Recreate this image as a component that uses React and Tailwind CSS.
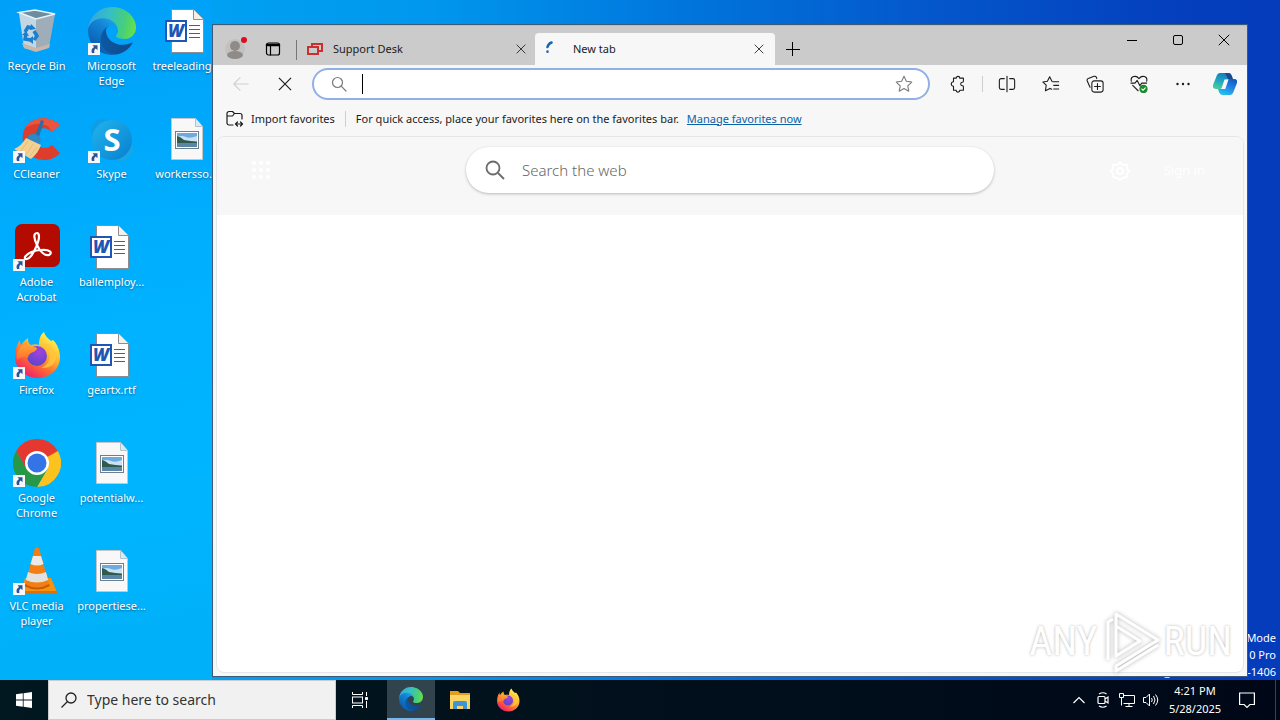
import React, { useId, useState } from "react";

const svgText = { fontFamily: '"Open Sans", sans-serif' };

const ShortcutArrow = () => (
  <svg className="absolute bottom-0 left-0 w-3 h-3" viewBox="0 0 12 12">
    <rect width="12" height="12" fill="#f6f7f9" />
    <path d="M4.500 2.200h5v5L7.800 5.600C6.300 6.600 5.900 7.800 6.400 10H4C2.900 7.400 3.700 5.300 6.100 3.900z" fill="#2b5197" />
  </svg>
);

const RecycleBin = () => (
  <svg className="w-12 h-12" viewBox="0 0 48 48">
    <path d="M6 6l17 5v33L11 41z" fill="#c3d6e3" />
    <path d="M23 11l19-4-6 33-13 4z" fill="#9fadb9" />
    <path d="M7 6l15-3 20 4-19 5z" fill="#6e8ca0" />
    <path d="M9 36l14 5 14-4-1 4-13 4-12-4z" fill="#c9b7ab" />
    <path d="M6 5.500l16-2.500 20 4-19 5z" fill="none" stroke="#e6f3fb" strokeWidth="1.500" />
    <g fill="none" stroke="#1b7fd0" strokeWidth="3.500">
      <path d="M12 25l3-5 4 1" />
      <path d="M21 24l3 5-3 4" />
      <path d="M18 33l-6-1 1-5" />
    </g>
    <g fill="#1b7fd0">
      <path d="M18 17l5 5-6 1z" />
      <path d="M20 29v8l-5-4z" />
      <path d="M9 28l4-4 3 5z" />
    </g>
  </svg>
);

const EdgeLogo = ({ className }) => {
  const id = useId();
  return (
    <svg className={className} viewBox="0 0 256 256">
      <defs>
        <linearGradient id={`${id}a`} x1="60" y1="177" x2="237" y2="177" gradientUnits="userSpaceOnUse">
          <stop offset="0" stopColor="#0c59a4" />
          <stop offset="1" stopColor="#114a8b" />
        </linearGradient>
        <linearGradient id={`${id}b`} x1="150" y1="95" x2="45" y2="230" gradientUnits="userSpaceOnUse">
          <stop offset="0" stopColor="#1b9de2" />
          <stop offset="0.3" stopColor="#1383d6" />
          <stop offset="1" stopColor="#0b5cae" />
        </linearGradient>
        <linearGradient id={`${id}c`} x1="10" y1="70" x2="250" y2="120" gradientUnits="userSpaceOnUse">
          <stop offset="0" stopColor="#35a8dc" />
          <stop offset="0.4" stopColor="#36bfc4" />
          <stop offset="0.75" stopColor="#46cf7a" />
          <stop offset="1" stopColor="#66e04a" />
        </linearGradient>
      </defs>
      <path
        fill={`url(#${id}a)`}
        d="M231.07 190.54c-3.33 1.77-6.87 3.38-10.56 4.76a101.7 101.7 0 01-35.9 6.46c-47.32 0-88.54-32.55-88.54-74.32A31.5 31.5 0 01112.63 100c-42.8 1.8-53.8 46.4-53.8 72.53 0 73.88 68.09 81.37 82.76 81.37 7.91 0 19.84-2.3 27-4.56l1.31-.44a128.34 128.34 0 0066.6-52.8 4 4 0 00-5.43-5.57z"
      />
      <path
        fill={`url(#${id}b)`}
        d="M105.73 241.42a79.2 79.2 0 01-22.74-21.34 80.72 80.72 0 0129.5-120c3.13-1.47 8.45-4.13 15.54-4a32.35 32.35 0 0125.69 13 31.88 31.88 0 016.36 18.66c0-.21 24.46-79.6-80-79.6-43.9 0-80 41.66-80 78.21a130.15 130.15 0 0012.11 56 128 128 0 00156.38 67.11 75.55 75.55 0 01-62.78-8z"
      />
      <path
        fill={`url(#${id}c)`}
        d="M152.33 148.86c-.81 1.05-3.3 2.5-3.3 5.66 0 2.61 1.7 5.12 4.72 7.23 14.38 10 41.49 8.68 41.56 8.68a59.56 59.56 0 0030.27-8.35A61.38 61.38 0 00256 109.21c.26-22.41-8-37.31-11.34-43.91C223.46 23.84 177.72 0 128 0A128 128 0 000 126.2c.48-36.54 36.8-66.05 80-66.05 3.5 0 23.46.34 42 10.07 16.34 8.58 24.9 18.94 30.85 29.21 6.18 10.67 7.28 24.15 7.28 29.52s-2.74 13.33-7.8 19.91z"
      />
    </svg>
  );
};

const FirefoxLogo = ({ className }) => {
  const id = useId();
  return (
    <svg className={className} viewBox="0 0 48 48">
      <defs>
        <linearGradient id={`${id}a`} x1="38" y1="6" x2="12" y2="44" gradientUnits="userSpaceOnUse">
          <stop offset="0" stopColor="#fff04a" />
          <stop offset="0.35" stopColor="#ffb52e" />
          <stop offset="0.65" stopColor="#ff6a33" />
          <stop offset="1" stopColor="#f0206c" />
        </linearGradient>
        <radialGradient id={`${id}b`} cx="0.6" cy="0.3" r="0.8">
          <stop offset="0" stopColor="#a43fe0" />
          <stop offset="1" stopColor="#5049c6" />
        </radialGradient>
        <linearGradient id={`${id}c`} x1="0" y1="0" x2="0" y2="1">
          <stop offset="0" stopColor="#ffa436" />
          <stop offset="1" stopColor="#ff6d2b" />
        </linearGradient>
      </defs>
      <path
        fill={`url(#${id}a)`}
        d="M31 1c1 4 4 6 7 9l2-1c4 4 7 10 7 17 0 12-10 21-22 21S2 38 2 26C2 19 4 13 7 9c0 2 0 3 1 5 2-3 4-5 7-7 0 4 1 6 3 7 3-1 6-1 8 0 0-5 1-10 5-13z"
      />
      <circle cx="24" cy="25" r="10" fill={`url(#${id}b)`} />
      <path
        fill={`url(#${id}c)`}
        d="M7 16c5-3 9-3 12 0 3 0 5 0 5 2-1 2-4 3-6 4-2 1-3 3-3 5-4-2-8-1-11 2-1-5 0-9 3-13z"
      />
      <path fill="#ffc53d" d="M27 13c7 1 11 7 10 13-1 5-4 9-9 11 10 1 16-6 15-13-1-5-4-8-7-11-3 0-6-1-9 0z" opacity="0.85" />
    </svg>
  );
};

const CCleanerLogo = () => (
  <svg className="w-12 h-12" viewBox="0 0 48 48">
    <path d="M47 10C37 0 19 1 12 13c-5 10-2 22 8 29 9 5 20 4 27-4l-8-8c-5 4-11 4-15-1-3-5-3-11 2-14 4-3 9-2 13 2z" fill="#dd3d2d" />
    <path d="M47 10C37 0 19 1 12 13c8-5 15-5 23-2l4 6z" fill="#ec5440" />
    <path d="M28 5l3 1-6 19-4-2z" fill="#2471a9" />
    <path d="M15 21c5-4 11-1 13 3l-2 6-12-5z" fill="#3187c2" />
    <path d="M13 23l15 7c-2 5-5 10-10 14L1 34c5-2 9-6 12-11z" fill="#f2d092" />
    <path d="M15 26l-7 10m12-7l-7 11m11-8l-7 9" stroke="#e6bd7c" fill="none" />
  </svg>
);

const SkypeLogo = () => (
  <svg className="w-12 h-12" viewBox="0 0 48 48">
    <defs>
      <linearGradient id="skype" x1="0" y1="0" x2="1" y2="1">
        <stop offset="0" stopColor="#22b5ee" />
        <stop offset="1" stopColor="#087fce" />
      </linearGradient>
    </defs>
    <circle cx="15" cy="16" r="12" fill="#109de3" />
    <circle cx="33" cy="34" r="12" fill="#17a7e6" />
    <circle cx="24" cy="25" r="20" fill="url(#skype)" />
    <text x="24" y="36" textAnchor="middle" fontSize="31" fontWeight="700" fill="#fff" style={svgText}>S</text>
  </svg>
);

const AcrobatLogo = () => (
  <svg className="w-12 h-12" viewBox="0 0 48 48">
    <rect x="2" y="1" width="45" height="43" rx="7" fill="#b30b00" />
    <path
      d="M24 10c-4 0-3 6 0 12 3 7 8 11 12 10 4-2 1-6-8-5-6 0-14 3-16 7-1 3 3 3 6-1 4-5 8-15 8-19 0-3-1-4-2-4z"
      fill="none"
      stroke="#fff"
      strokeWidth="2.200"
    />
  </svg>
);

const ChromeLogo = () => (
  <svg className="w-12 h-12" viewBox="0 0 48 48">
    <path d="M24 24L3.200 12A24 24 0 0 1 44.800 12z" fill="#e5392f" />
    <path d="M24 12h20.800A24 24 0 0 1 24 48l10.400-18z" fill="#fcc31e" />
    <path d="M13.600 30L3.200 12A24 24 0 0 0 24 48l10.400-18z" fill="#279847" />
    <path d="M24 12h20.800L24 24 13.600 30 3.200 12z" fill="#e5392f" />
    <circle cx="24" cy="24" r="12" fill="#fff" />
    <circle cx="24" cy="24" r="9.500" fill="#3474e6" />
  </svg>
);

const VlcLogo = () => (
  <svg className="w-12 h-12" viewBox="0 0 48 48">
    <path d="M12 31h26l6 14H8z" fill="#f5920f" />
    <path d="M8 44h36v2H8z" fill="#dd6f0a" />
    <path d="M22 1q2-1 4 0l10 36q-12 7-24 0z" fill="#f37f14" />
    <path d="M20 9h8l2.500 8q-6.500 3-13 0z" fill="#eceae6" />
    <path d="M15 25q9 4 18 0l2.200 8q-11.200 5-22.400 0z" fill="#e3e1de" />
    <path d="M12 37q12 7 24 0l1 2q-13 7-26 0z" fill="#c95a08" />
  </svg>
);

const WordFile = () => (
  <svg className="w-12 h-12" viewBox="0 0 48 48">
    <path d="M8.500 2.500h22l10 10v33h-32z" fill="#fff" stroke="#8d8d8d" />
    <path d="M30.500 2.500v10h10" fill="#f3efe9" stroke="#8d8d8d" />
    <path d="M26 18.500h11M26 22.500h11M26 26.500h11M26 30.500h11" stroke="#2a66b4" />
    <rect x="3" y="14" width="20" height="20" fill="#fff" stroke="#1f55b5" strokeWidth="2" />
    <text x="13" y="30" textAnchor="middle" fontSize="17" fontWeight="800" fontStyle="italic" fill="#1f55b5" style={svgText}>W</text>
  </svg>
);

const ImageFile = () => (
  <svg className="w-12 h-12" viewBox="0 0 48 48">
    <path d="M8.500 3.500h24l7 8v33h-31z" fill="#f8f8f8" stroke="#c4c6c8" />
    <path d="M32.500 3.500v8h7" fill="#d7ebf5" stroke="#b5c3cc" />
    <rect x="12.500" y="16.500" width="23" height="17" fill="#fff" stroke="#6d7f8f" />
    <rect x="14" y="18" width="20" height="14" fill="#6ea9e0" />
    <path d="M14 22q5-2 9 0t11-1v5H14z" fill="#c7e2f6" />
    <path d="M14 21q4 1 7 4l13 2v1H14z" fill="#2f5a4c" />
    <path d="M14 28h20v4H14z" fill="#5b87a6" />
  </svg>
);

const desktopItems = [
  { label: "Recycle Bin", Icon: RecycleBin },
  { label: "CCleaner", Icon: CCleanerLogo, shortcut: true },
  { label: "Adobe Acrobat", Icon: AcrobatLogo, shortcut: true },
  { label: "Firefox", Icon: () => <FirefoxLogo className="w-12 h-12" />, shortcut: true },
  { label: "Google Chrome", Icon: ChromeLogo, shortcut: true },
  { label: "VLC media player", Icon: VlcLogo, shortcut: true },
  { label: "Microsoft Edge", Icon: () => <EdgeLogo className="w-12 h-12" />, shortcut: true },
  { label: "Skype", Icon: SkypeLogo, shortcut: true },
  { label: "ballemploy...", Icon: WordFile },
  { label: "geartx.rtf", Icon: WordFile },
  { label: "potentialw...", Icon: ImageFile },
  { label: "propertiese...", Icon: ImageFile },
  { label: "treeleading...", Icon: WordFile },
  { label: "workersso...", Icon: ImageFile },
];

const DesktopItem = ({ label, Icon, shortcut }) => (
  <button className="flex flex-col items-center pt-[7px]">
    <span className="relative block w-12 h-12">
      <Icon />
      {shortcut && <ShortcutArrow />}
    </span>
    <span className="mt-[3px] w-[74px] text-[11px] leading-[15px] text-white text-center [text-shadow:0_1px_2px_rgba(0,40,80,0.6)]">
      {label}
    </span>
  </button>
);

// 20x20 line icon used all over the browser chrome
const LineIcon = ({ className = "w-5 h-5", children }) => (
  <svg
    className={className}
    viewBox="0 0 20 20"
    fill="none"
    stroke="currentColor"
    strokeWidth="1.200"
    strokeLinecap="round"
    strokeLinejoin="round"
  >
    {children}
  </svg>
);

const ToolButton = ({ label, children }) => (
  <button aria-label={label} className="w-11 h-8 shrink-0 flex items-center justify-center text-[#1b1b1b]">
    {children}
  </button>
);

const CloseGlyph = ({ className }) => (
  <svg className={className} viewBox="0 0 12 12" stroke="currentColor" fill="none">
    <path d="M.8.8l10.400 10.400M11.200.8L.8 11.200" />
  </svg>
);

const TabStrip = () => (
  <div className="h-10 shrink-0 flex bg-[#cbcbcb] border-t border-[#bdbdbd]">
    <button aria-label="Profile" className="ml-3 w-6 mt-1 flex items-center justify-center">
      <svg className="w-6 h-6" viewBox="0 0 24 24">
        <circle cx="10" cy="13" r="10" fill="#c3c1bf" />
        <circle cx="10" cy="10" r="5" fill="#8f8b88" />
        <ellipse cx="10" cy="19" rx="8" ry="4" fill="#8f8b88" />
        <circle cx="19" cy="4" r="3" fill="#e00b1c" />
      </svg>
    </button>
    <button aria-label="Tab actions" className="ml-3 w-6 mt-1.5 flex items-center justify-center text-black">
      <LineIcon className="w-5 h-5">
        <rect x="3.500" y="4" width="13" height="12" rx="2" strokeWidth="1.200" />
        <path d="M4 6h12" strokeWidth="2.500" />
        <path d="M7.500 7v9" />
      </LineIcon>
    </button>
    <div className="ml-[11px] mt-3.5 w-px h-5 bg-[#777]" />
    <div className="flex flex-1 mt-[7px] h-8 min-w-0">
      <div className="w-[238px] pl-2.5 pr-1 flex items-center text-[#1b1b1b]">
        <svg className="w-4 h-4 shrink-0" viewBox="0 0 16 16" fill="none" stroke="#c9302f" strokeWidth="2">
          <path d="M5 5V3h10v7h-3" />
          <rect x="1" y="6" width="10" height="7" />
        </svg>
        <span className="ml-2.5 flex-1 text-[11px]">Support Desk</span>
        <button aria-label="Close Support Desk" className="w-4 h-4 mr-0.5 flex items-center justify-center">
          <CloseGlyph className="w-2.5 h-2.5" />
        </button>
      </div>
      <div className="w-60 px-2 flex items-center rounded-t bg-[#f7f7f7] text-[#1b1b1b]">
        <svg className="w-4 h-4 shrink-0" viewBox="0 0 16 16" fill="none" stroke="#1765ae" strokeWidth="2.500" strokeLinecap="round">
          <path d="M4.500 6q1-3.500 4-4.500M4.500 10.500v.2" />
        </svg>
        <span className="ml-3.5 flex-1 text-[11px]">New tab</span>
        <button aria-label="Close New tab" className="w-4 h-4 flex items-center justify-center">
          <CloseGlyph className="w-2.5 h-2.5" />
        </button>
      </div>
      <button aria-label="New tab" className="w-9 flex items-center justify-center text-black">
        <svg className="w-3.5 h-3.5" viewBox="0 0 14 14" stroke="currentColor">
          <path d="M6.500 0v14M0 7.500h14" />
        </svg>
      </button>
    </div>
    <div className="flex h-7">
      <button aria-label="Minimize" className="w-[46px] flex items-center justify-center text-black">
        <svg className="w-2.5 h-2.5" viewBox="0 0 10 10" stroke="currentColor">
          <path d="M0 5.500h10" />
        </svg>
      </button>
      <button aria-label="Maximize" className="w-[46px] flex items-center justify-center text-black">
        <svg className="w-2.5 h-2.5" viewBox="0 0 10 10" stroke="currentColor" fill="none">
          <rect x=".5" y=".5" width="9" height="9" rx="1.500" />
        </svg>
      </button>
      <button aria-label="Close" className="w-[46px] flex items-center justify-center text-black">
        <CloseGlyph className="w-3 h-3" />
      </button>
    </div>
  </div>
);

const Toolbar = () => {
  const [url, setUrl] = useState("");

  return (
    <div className="flex items-center h-[38px] shrink-0 pl-1.5">
      <button aria-label="Back" className="w-11 h-8 flex items-center justify-center text-[#cfcfcf]">
        <LineIcon className="w-[18px] h-[18px]">
          <path d="M18 10H2.500M9 3L2 10l7 7" />
        </LineIcon>
      </button>
      <ToolButton label="Stop">
        <CloseGlyph className="w-3.5 h-3.5" />
      </ToolButton>
      <div className="ml-[5px] flex-1 h-8 px-[15px] flex items-center rounded-full bg-white border-2 border-[#91b0e6]">
        <LineIcon className="w-5 h-5 text-[#7a7a7a]">
          <circle cx="8.500" cy="8.500" r="5" />
          <path d="M12.200 12.200L17 17" />
        </LineIcon>
        <div className="ml-[13px] w-px h-5 bg-black" />
        <input
          aria-label="Address and search bar"
          value={url}
          onChange={(e) => setUrl(e.target.value)}
          className="flex-1 min-w-0 text-sm outline-none bg-transparent"
        />
        <button aria-label="Add to favorites" className="text-[#7a7a7a]">
          <LineIcon className="w-[18px] h-[18px]">
            <path d="M10 1.500l2.600 5.500 6 .8-4.400 4.200 1.100 6L10 15.100 4.700 18l1.100-6L1.400 7.800l6-.8z" />
          </LineIcon>
        </button>
      </div>
      <div className="ml-1.5" />
      <ToolButton label="Extensions">
        <LineIcon className="w-[18px] h-[18px]">
          <path d="M5 3.500h3a2 2 0 014 0h4v3.500a1 1 0 01-1 1 2 2 0 000 4 1 1 0 011 1v4h-4a2 2 0 01-4 0H5v-4.500a2.500 2.500 0 010-5z" />
        </LineIcon>
      </ToolButton>
      <div className="mx-0.5 w-px h-4 bg-[#cfcfcf]" />
      <ToolButton label="Split screen">
        <LineIcon className="w-[18px] h-[18px]">
          <path d="M10 1.500v17M7 4H3.500A2 2 0 001.500 6v8a2 2 0 002 2H7M13 4h3.500a2 2 0 012 2v8a2 2 0 01-2 2H13" />
        </LineIcon>
      </ToolButton>
      <ToolButton label="Favorites">
        <LineIcon className="w-[18px] h-[18px]">
          <path d="M12 7.500h6.500M13 11.500h5.500M13 15.500h5.500M11 7L8.500 2 6 7l-5 .8 3.700 3.500-.9 6.200 5-2.600 2 1" />
        </LineIcon>
      </ToolButton>
      <ToolButton label="Collections">
        <LineIcon className="w-[18px] h-[18px]">
          <path d="M4.500 13.500L1.500 7A2 2 0 012.500 4L9 1.500a2 2 0 012.500 1l.5 1.500" />
          <rect x="6.500" y="6.500" width="12.500" height="12.500" rx="2.500" />
          <path d="M12.750 9.500v6.500M9.500 12.750H16" />
        </LineIcon>
      </ToolButton>
      <ToolButton label="Browser essentials">
        <LineIcon className="w-[18px] h-[18px]">
          <path d="M1.500 7C0 1 7 0 10 4 13 0 20 1 18.500 7M3 11.500l6 6" />
          <path d="M1 9h4.500L8 6l3 6 2-3h5.500" />
          <circle cx="15" cy="15.500" r="4" fill="#1b8a2d" stroke="#1b8a2d" />
          <path d="M13 15.500l1.500 1.500 2.500-2.700" stroke="#fff" />
        </LineIcon>
      </ToolButton>
      <ToolButton label="Settings and more">
        <svg className="w-4 h-4" viewBox="0 0 16 16" fill="currentColor">
          <circle cx="2.500" cy="8" r="1.200" />
          <circle cx="8" cy="8" r="1.200" />
          <circle cx="13.500" cy="8" r="1.200" />
        </svg>
      </ToolButton>
      <button aria-label="Copilot" className="w-10 h-8 shrink-0 flex items-center justify-center mr-0.5">
        <svg className="w-6 h-6" viewBox="0 0 24 24">
          <defs>
            <linearGradient id="copA" x1="0.5" y1="0" x2="0.2" y2="1">
              <stop offset="0" stopColor="#0f7fc4" />
              <stop offset="0.5" stopColor="#22a7bd" />
              <stop offset="1" stopColor="#4fcf9a" />
            </linearGradient>
            <linearGradient id="copB" x1="0.8" y1="0" x2="0.3" y2="1">
              <stop offset="0" stopColor="#1558b8" />
              <stop offset="0.5" stopColor="#2383e8" />
              <stop offset="1" stopColor="#22c3f2" />
            </linearGradient>
          </defs>
          <path d="M4 3q1-2 3-2h8q2 0 3 3l1 3h-4q-2 0-3 3l-2 5q-1 2-3 2H3q-4 0-3-4z" fill="url(#copA)" />
          <path d="M20 21q-1 2-3 2H9q-2 0-3-3l-1-3h3q2 0 3-3l2-5q1-2 3-2h5q4 0 3 4z" fill="url(#copB)" />
          <path d="M12 1h4q2 0 3 3l1 3h-5z" fill="#174a93" />
          <path d="M11.500 7.500h4l-3.200 9.500h-4z" fill="#f7f7f7" />
        </svg>
      </button>
    </div>
  );
};

const FavoritesBar = () => (
  <div className="flex items-center h-[33px] shrink-0 pl-3 pb-px text-[11px] text-[#1b1b1b] whitespace-nowrap">
    <button className="flex items-center gap-1.5">
      <LineIcon className="w-5 h-5">
        <path d="M8 16H4a2 2 0 01-2-2V4.500a2 2 0 012-2h3.500l2 2H15a2 2 0 012 2V10M2 7h5.500l2-2.500" />
        <path d="M10.500 15h7M12.500 13l-2 2 2 2M15.500 13l2 2-2 2" />
      </LineIcon>
      Import favorites
    </button>
    <div className="mx-2.5 w-px h-4 bg-[#cfcfcf]" />
    <span>For quick access, place your favorites here on the favorites bar.</span>
    <a href="#favorites" className="ml-2 text-[#0b62a8] underline">
      Manage favorites now
    </a>
  </div>
);

const NewTabPage = () => {
  const [query, setQuery] = useState("");

  return (
    <div className="flex-1 mx-[3px] mb-[3px] rounded-lg border border-[#e4e7e8] bg-white overflow-hidden">
      <div className="h-[78px] pl-8 pr-[38px] flex items-start justify-between bg-[#f7f7f7]">
        <div className="flex-1 h-5 mt-6 flex">
          <button aria-label="App launcher" className="text-white">
            <svg className="w-6 h-5" viewBox="0 0 24 20" fill="currentColor">
              {[2, 9, 16].map((y) =>
                [5, 12, 19].map((x) => <circle key={`${x}-${y}`} cx={x} cy={y} r="2" />)
              )}
            </svg>
          </button>
        </div>
        <label className="w-[528px] h-[46px] mt-2.5 ml-1.5 px-[18px] flex items-center gap-4 rounded-full bg-white shadow-[0_1px_3px_rgba(0,0,0,0.25)]">
          <svg className="w-[22px] h-[22px] text-[#6b6b6b]" viewBox="0 0 22 22" fill="none" stroke="currentColor" strokeWidth="1.800">
            <circle cx="9" cy="9" r="6.500" />
            <path d="M14 14l6 6" />
          </svg>
          <input
            aria-label="Search the web"
            placeholder="Search the web"
            value={query}
            onChange={(e) => setQuery(e.target.value)}
            className="flex-1 text-[15px] font-light outline-none placeholder:text-[#666]"
          />
        </label>
        <div className="flex-1 mt-[22px] h-6 flex items-center justify-end gap-[34px] text-white">
          <button aria-label="Page settings">
            <svg className="w-5 h-5" viewBox="0 0 20 20" fill="none" stroke="currentColor" strokeWidth="2">
              <path d="M10 1l3 3 4 0 0 4 2 2-2 3v3l-4 1-3 2-3-2-4-1v-3l-2-3 2-2V4h4z" />
              <circle cx="10" cy="10" r="3" />
            </svg>
          </button>
          <a href="#signin" className="text-[13px]">Sign in</a>
        </div>
      </div>
    </div>
  );
};

const Watermark = () => (
  <div className="absolute right-12 bottom-1.5 h-16 flex items-center text-[40px] leading-none text-white font-['Roboto_Condensed','Open_Sans_Condensed','Liberation_Sans_Narrow','DejaVu_Sans_Condensed',sans-serif] [text-shadow:0_0_3px_rgba(0,0,0,0.3)] pointer-events-none">
    <span>ANY</span>
    <svg className="ml-1 w-[62px] h-16 drop-shadow-[0_0_2px_rgba(0,0,0,0.3)]" viewBox="0 0 62 64" fill="none" stroke="#fff" strokeWidth="3">
      <path d="M14 20V4l42 26-42 26v5l42-26M14 18v28l24-15-24-15" strokeLinejoin="round" />
      <path d="M6 50V12l5-3" />
    </svg>
    <span>RUN</span>
  </div>
);

const BrowserWindow = () => (
  <div className="absolute left-[212px] right-8 top-6 bottom-[3px] flex flex-col border border-[#3c5a78] bg-[#f7f7f7]">
    <TabStrip />
    <Toolbar />
    <FavoritesBar />
    <NewTabPage />
  </div>
);

const Taskbar = () => (
  <div className="h-10 shrink-0 flex bg-gradient-to-r from-[#011820] via-[#01101c] to-[#000818] text-white">
    <button aria-label="Start" className="w-12 flex items-center justify-center">
      <svg className="w-4 h-4" viewBox="0 0 16 16" fill="#fff">
        <path d="M0 2.200l6.800-.9v6.300H0zM7.600 1.200L16 0v7.600H7.600zM0 8.400h6.800v6.300L0 13.800zM7.600 8.400H16V16l-8.400-1.200z" />
      </svg>
    </button>
    <label className="w-72 px-3 flex items-center gap-2.5 bg-[#f1f1f1] border border-[#c9cdcf] text-[#222]">
      <svg className="w-4 h-4 shrink-0" viewBox="0 0 16 16" fill="none" stroke="currentColor" strokeWidth="1.300">
        <circle cx="10" cy="6" r="5" />
        <path d="M6.500 9.500L.5 15.500" />
      </svg>
      <input
        aria-label="Type here to search"
        placeholder="Type here to search"
        className="flex-1 min-w-0 text-sm outline-none placeholder:text-[#333]"
      />
    </label>
    <button aria-label="Task View" className="w-[51px] pr-1 flex items-center justify-center">
      <svg className="w-4 h-4" viewBox="0 0 16 16" fill="none" stroke="#fff">
        <path d="M.5 0v2.500h10V0M.5 16v-2.500h10V16M14.500 0v4M14.500 9v7" />
        <rect x=".5" y="5" width="10" height="6" />
        <path d="M13.500 5.500h2v2h-2z" fill="#fff" />
      </svg>
    </button>
    <button aria-label="Microsoft Edge" className="w-12 flex items-center justify-center bg-[#31434c] border-b-2 border-[#76b9ed]">
      <EdgeLogo className="w-6 h-6" />
    </button>
    <button aria-label="File Explorer" className="w-[49px] flex items-center justify-center">
      <svg className="w-6 h-6" viewBox="0 0 24 24">
        <path d="M2 3h8l2 2h10v4H2z" fill="#e39e1e" />
        <path d="M2 7h20v14H2z" fill="#fcd462" />
        <path d="M5 21v-6q0-2 2-2h10q2 0 2 2v6h-4v-3H9v3z" fill="#3b95d8" />
      </svg>
    </button>
    <button aria-label="Firefox" className="w-12 flex items-center justify-center">
      <FirefoxLogo className="w-6 h-6" />
    </button>
    <div className="ml-auto flex items-center">
      <div className="flex items-center gap-2">
        <button aria-label="Show hidden icons">
          <svg className="w-4 h-4" viewBox="0 0 16 16" fill="none" stroke="#fff" strokeWidth="1.200">
            <path d="M2.500 11L8 5.500l5.500 5.500" />
          </svg>
        </button>
        <button aria-label="Meet Now">
          <svg className="w-4 h-4" viewBox="0 0 16 16" fill="none" stroke="#fff" strokeWidth="1.200">
            <rect x="3" y="4.500" width="7" height="7" rx="1" />
            <path d="M10 7l3-2v6l-3-2M4 2q4-2.500 7.500 0M4 14q4 2.500 7.500 0" />
          </svg>
        </button>
        <button aria-label="Network">
          <svg className="w-4 h-4" viewBox="0 0 16 16" fill="none" stroke="#fff">
            <path d="M5 3.500h10.500v8H4.500M10 11.500v3M6.500 14.500h7" />
            <path d="M.5 1.500h4v4h-4zM2.500 5.500v8" />
          </svg>
        </button>
        <button aria-label="Volume">
          <svg className="w-4 h-4" viewBox="0 0 16 16" fill="none" stroke="#fff">
            <path d="M.5 5.500H3L6.500 2v12L3 10.500H.5zM8.500 6q1.500 2 0 4M10.500 4q3 4 0 8M12.500 2.500q4.500 5.500 0 11" />
          </svg>
        </button>
      </div>
      <div className="w-[72px] text-[11px] leading-[18px] text-center">
        <div>4:21 PM</div>
        <div>5/28/2025</div>
      </div>
      <button aria-label="Notifications" className="w-8 flex justify-center">
        <svg className="w-4 h-4" viewBox="0 0 16 16" fill="none" stroke="#fff" strokeWidth="1.200">
          <path d="M.6 1h14.800v11.500h-4.500L8 15.400l-2.900-2.900H.6z" />
        </svg>
      </button>
      <div className="ml-3 mr-1 w-px h-10 bg-[#3a4350]" />
    </div>
  </div>
);

export default function App() {
  return (
    <div className="h-screen flex flex-col overflow-hidden font-['Noto_Sans','Open_Sans',sans-serif]">
      <div className="relative flex-1 bg-[linear-gradient(90deg,#00a9fa_0%,#009cf0_25%,#0098ee_33%,#0078de_52%,#0458cb_72%,#043fbe_92%,#043cbb_100%)]">
        <div className="absolute inset-y-0 left-0 w-[212px] bg-[linear-gradient(170deg,#00a0f8_0%,#00b1ff_45%,#00b5ff_70%,#00b0f8_100%)]" />
        <div className="relative -ml-px w-[225px] grid grid-flow-col grid-rows-[repeat(6,108px)] grid-cols-3">
          {desktopItems.map((item) => (
            <DesktopItem key={item.label} {...item} />
          ))}
        </div>
        <div className="absolute right-1 bottom-0 text-right text-[11px] leading-[17px] text-white">
          <div>Mode</div>
          <div>0 Pro</div>
          <div>Build 19041.vb_release.191206-1406</div>
        </div>
        <BrowserWindow />
        <Watermark />
      </div>
      <Taskbar />
    </div>
  );
}
